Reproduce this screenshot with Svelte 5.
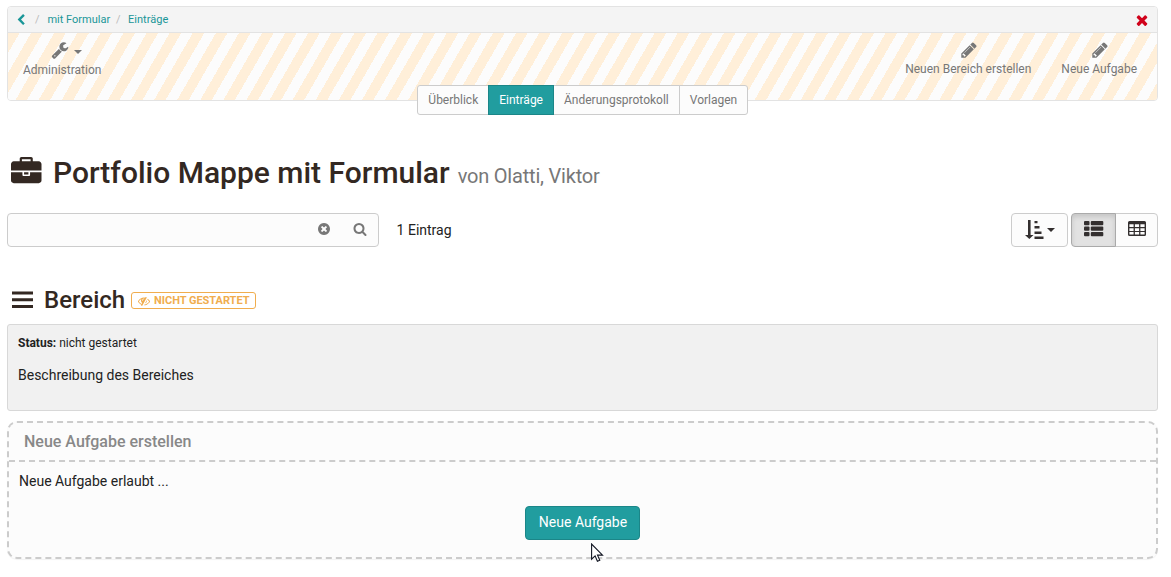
<script>
  const icons = {
    back: 'M1427 301l-531 531 531 531q19 19 19 45t-19 45l-166 166q-19 19-45 19t-45-19l-742-742q-19-19-19-45t19-45l742-742q19-19 45-19t45 19l166 166q19 19 19 45t-19 45z',
    close: 'M1490 1322q0 40-28 68l-136 136q-28 28-68 28t-68-28l-294-294-294 294q-28 28-68 28t-68-28l-136-136q-28-28-28-68t28-68l294-294-294-294q-28-28-28-68t28-68l136-136q28-28 68-28t68 28l294 294 294-294q28-28 68-28t68 28l136 136q28 28 28 68t-28 68l-294 294 294 294q28 28 28 68z',
    wrench: 'M448 1472q0-26-19-45t-45-19-45 19-19 45 19 45 45 19 45-19 19-45zm644-420l-682 682q-37 37-90 37-52 0-91-37l-106-108q-38-36-38-90 0-53 38-91l681-681q39 98 114.500 173.500t173.500 114.500zm634-435q0 39-23 106-47 134-164.500 217.500t-258.500 83.500q-185 0-316.500-131.500t-131.500-316.500 131.500-316.500 316.500-131.500q58 0 121.500 16.500t107.500 46.500q16 11 16 28t-16 28l-293 169v224l193 107q5-3 79-48.500t135.500-81 70.500-35.500q15 0 23.500 10t8.500 25z',
    pencil: 'M491 1536l91-91-235-235-91 91v107h128v128h107zm523-928q0-22-22-22-10 0-17 7l-542 542q-7 7-7 17 0 22 22 22 10 0 17-7l542-542q7-7 7-17zm-54-192l416 416-832 832h-416v-416zm683 96q0 53-37 90l-166 166-416-416 166-165q36-38 90-38 53 0 91 38l235 234q37 39 37 91z',
    briefcase: 'M640 256h512v-128h-512v128zm1152 640v480q0 66-47 113t-113 47h-1472q-66 0-113-47t-47-113v-480h672v160q0 26 19 45t45 19h320q26 0 45-19t19-45v-160h672zm-768 0v128h-256v-128h256zm768-480v384h-1792v-384q0-66 47-113t113-47h352v-160q0-40 28-68t68-28h576q40 0 68 28t28 68v160h352q66 0 113 47t47 113z',
    clear: 'M1277 1122q0-26-19-45l-181-181 181-181q19-19 19-45 0-27-19-46l-90-90q-19-19-46-19-26 0-45 19l-181 181-181-181q-19-19-45-19-27 0-46 19l-90 90q-19 19-19 46 0 26 19 45l181 181-181 181q-19 19-19 45 0 27 19 46l90 90q19 19 46 19 26 0 45-19l181-181 181 181q19 19 45 19 27 0 46-19l90-90q19-19 19-46zm387-226q0 209-103 385.500t-279.500 279.500-385.500 103-385.500-103-279.500-279.500-103-385.500 103-385.500 279.500-279.500 385.500-103 385.500 103 279.500 279.500 103 385.500z',
    search: 'M1216 832q0-185-131.500-316.500t-316.500-131.500-316.500 131.500-131.500 316.500 131.500 316.500 316.500 131.500 316.500-131.500 131.500-316.500zm512 832q0 52-38 90t-90 38q-54 0-90-38l-343-342q-179 124-399 124-143 0-273.500-55.500t-225-150-150-225-55.500-273.500 55.500-273.500 150-225 225-150 273.500-55.500 273.500 55.500 225 150 150 225 55.500 273.500q0 220-124 399l343 343q37 37 37 90z',
    hidden: 'M555 1335l78-141q-87-63-136-159t-49-203q0-121 61-225-229 117-381 353 167 258 427 375zm389-759q0-20-14-34t-34-14q-125 0-214.500 89.500t-89.500 214.500q0 20 14 34t34 14 34-14 14-34q0-86 61-147t147-61q20 0 34-14t14-34zm363-191q0 7-1 9-106 189-316 567t-315 566l-49 89q-10 16-28 16-12 0-134-70-16-10-16-28 0-12 44-87-143-65-263.500-173t-208.500-245q-20-31-20-69t20-69q153-235 380-371t496-136q89 0 180 17l54-97q10-16 28-16 5 0 18 6t31 15.500 33 18.500 31.500 18.500 19.500 11.500q16 10 16 27zm37 447q0 139-79 253.500t-209 164.500l280-502q8 45 8 84zm448 128q0 35-20 69-39 64-109 145-150 172-347.500 267t-419.500 95l74-132q212-18 392.500-137t301.500-307q-115-179-282-294l63-112q95 64 182.500 153t144.500 184q20 34 20 69z'
  };
  const tabs = ['Überblick', 'Einträge', 'Änderungsprotokoll', 'Vorlagen'];
  const active = 'Einträge';
</script>

{#snippet icon(name, size)}
  <svg class="icon" width={size} height={size} viewBox="0 0 1792 1792" aria-hidden="true"><path d={icons[name]} /></svg>
{/snippet}

<main>
  <header>
    <nav class="crumbs">
      <a class="back" href="#back" aria-label="Zurück">{@render icon('back', 12)}</a>
      <span class="sep">/</span><a class="folder" href="#folder">mit Formular</a>
      <span class="sep second">/</span><a href="#entries">Einträge</a>
      <button class="close" aria-label="Schließen">{@render icon('close', 16)}</button>
    </nav>
    <div class="tools">
      <button class="tool admin">
        <span class="glyph">{@render icon('wrench', 18)}<i class="caret"></i></span>
        <span>Administration</span>
      </button>
      <div class="actions">
        <button class="tool"><span class="glyph">{@render icon('pencil', 18)}</span><span>Neuen Bereich erstellen</span></button>
        <button class="tool"><span class="glyph">{@render icon('pencil', 18)}</span><span>Neue Aufgabe</span></button>
      </div>
    </div>
  </header>
  <nav class="tabs">
    {#each tabs as tab}
      <button class:active={tab === active}>{tab}</button>
    {/each}
  </nav>

  <h1>{@render icon('briefcase', 30.5)}<span>Portfolio Mappe mit Formular</span><small>von Olatti, Viktor</small></h1>

  <div class="filter">
    <div class="search">
      <input aria-label="Suche" />
      <button aria-label="Leeren">{@render icon('clear', 14)}</button>
      <button aria-label="Suchen">{@render icon('search', 14)}</button>
    </div>
    <span class="count">1 Eintrag</span>
    <button class="btn sort" aria-label="Sortieren">
      <svg width="19" height="20" viewBox="0 0 19 20"><path d="M3 0h2.600v15h2.900L4.300 19 0 15h3zM9.500 1h3v2.300h-3zM9.500 6h5v2.400h-5zM9.500 11.500h7v2.400h-7zM9.500 16.500h9v2.400h-9z" /></svg>
      <i class="caret"></i>
    </button>
    <div class="views">
      <button class="btn pressed" aria-label="Liste">
        <svg width="20" height="16" viewBox="0 0 20 16"><rect x="0" y="0" width="5.500" height="4.300" rx="1" /><rect x="6.800" y="0" width="12.500" height="4.300" rx="1" /><rect x="0" y="5.500" width="5.500" height="4.300" rx="1" /><rect x="6.800" y="5.500" width="12.500" height="4.300" rx="1" /><rect x="0" y="11" width="5.500" height="4.300" rx="1" /><rect x="6.800" y="11" width="12.500" height="4.300" rx="1" /></svg>
      </button>
      <button class="btn" aria-label="Tabelle">
        <svg width="18" height="15" viewBox="0 0 18 15"><path fill-rule="evenodd" d="M1.500 0h15q1.500 0 1.500 1.500v12q0 1.500-1.500 1.500h-15Q0 15 0 13.500v-12Q0 0 1.500 0zM1.400 3.200v2.700h4.200V3.200zM6.900 3.200v2.700h4.200V3.200zM12.400 3.200v2.700h4.200V3.200zM1.400 7.200v2.700h4.200V7.200zM6.900 7.200v2.700h4.200V7.200zM12.400 7.200v2.700h4.200V7.200zM1.400 11.100v2.500h4.200v-2.500zM6.900 11.100v2.500h4.200v-2.500zM12.400 11.100v2.500h4.200v-2.500z" /></svg>
      </button>
    </div>
  </div>

  <h2>
    <svg width="21" height="18" viewBox="0 0 21 18"><path d="M0 .5h21v3H0zM0 7.200h21v3H0zM0 14h21v3H0z" /></svg>
    <span>Bereich</span>
    <span class="badge">{@render icon('hidden', 12)}NICHT GESTARTET</span>
  </h2>

  <section class="well">
    <p class="status"><b>Status:</b> nicht gestartet</p>
    <p>Beschreibung des Bereiches</p>
  </section>

  <section class="panel">
    <h3>Neue Aufgabe erstellen</h3>
    <div class="body">
      <p>Neue Aufgabe erlaubt ...</p>
      <button class="primary">Neue Aufgabe</button>
    </div>
  </section>
  <svg class="cursor" width="13" height="20" viewBox="0 0 13 20"><path d="M.6 1v15.200l3.500-3.300 2.300 5.400 2.400-1-2.300-5.200h5z" fill="#fff" stroke="#111522" stroke-width="1.100" /></svg>
</main>

<style>
  :global(body) { margin: 0; background: #fff; }
  main { position: relative; box-sizing: border-box; height: 577px; padding: 6px 13px 0 7px; font: 14px/20px Roboto, sans-serif; color: #222; overflow: hidden; }
  * { box-sizing: border-box; }
  button { font: inherit; margin: 0; padding: 0; border: 0; background: none; color: inherit; }
  p, h1, h2, h3 { margin: 0; font-weight: 400; }
  svg { fill: currentColor; flex: none; display: block; }
  a { color: #1a9698; text-decoration: none; }
  .caret { width: 0; height: 0; border: 4px solid transparent; border-top-color: currentColor; border-bottom: 0; }

  header { height: 95px; border: 1px solid #e3e3e3; border-radius: 4px; overflow: hidden; }
  .crumbs { display: flex; align-items: center; height: 26px; padding: 0 8px 0 7px; background: #f4f4f4; border-bottom: 1px solid #e3e3e3; font-size: 11px; }
  .back { width: 20px; }
  .sep { width: 12.4px; color: #bbb; }
  .second { padding-left: 6px; width: 18px; }
  .close { margin: 1px -1px 0 auto; color: #d0021b; }
  .tools { display: flex; justify-content: space-between; height: 67px; padding: 8px 5px 0; background: repeating-linear-gradient(120deg, #ffefd9 0 10px, #fcfcfc 10px 20px); color: #777; font-size: 12px; line-height: 17px; }
  .actions { display: flex; }
  .tool { display: flex; flex-direction: column; align-items: center; height: 39px; padding: 0 15px; }
  .tool > span:last-child { padding-top: 2px; }
  .admin { padding-left: 10px; }
  .admin > span:last-child { padding-top: 3px; }
  .glyph { display: flex; align-items: center; height: 18px; }
  .actions .glyph { padding-left: 1px; }
  .admin .glyph { padding-left: 9px; }
  .glyph .caret { margin: 4px 0 0 5px; border-width: 4px 4.5px 0; }
  .tabs { display: flex; justify-content: center; position: relative; height: 30px; margin: -16px 0 0 1px; font-size: 12px; line-height: 28px; color: #777; }
  .tabs button { height: 30px; padding: 0 10px; border: 1px solid #ccc; background: #fcfcfc; margin-left: -1px; }
  .tabs button:first-child { padding: 0 10px 0 10.6px; border-radius: 3px 0 0 3px; }
  .tabs button:last-child { border-radius: 0 3px 3px 0; }
  .tabs .active { position: relative; z-index: 1; background: #219d9f; border-color: #1b8688; color: #fff; }

  h1 { display: flex; align-items: baseline; height: 42px; margin-top: 37px; padding-left: 4px; color: #332822; font-size: 30px; line-height: 42px; font-weight: 500; }
  h1 .icon { align-self: center; margin-top: -1px; }
  h1 span { margin-left: 11.5px; }
  small { margin-left: 8px; color: #777; font-size: 20px; font-weight: 400; letter-spacing: -.2px; }

  .filter { display: flex; align-items: center; height: 34px; margin-top: 19px; }
  .search { display: flex; width: 372px; height: 34px; border: 1px solid #ccc; border-radius: 4px; background: #fcfcfc; color: #777; }
  .search input { flex: 1; min-width: 0; border: 0; background: none; outline: 0; }
  .search button { display: flex; align-items: center; justify-content: center; width: 36px; padding-bottom: 2px; }
  .count { margin: 0 auto 0 17.600px; }
  .btn { display: flex; align-items: center; justify-content: center; height: 34px; border: 1px solid #ccc; background: #fcfcfc; color: #332f2f; }
  .sort { width: 57px; gap: 3px; border-radius: 4px; }
  .sort svg { margin-top: -1px; }
  .views { display: flex; margin-left: 3px; }
  .views .btn { width: 43px; padding-bottom: 3px; border-radius: 0 4px 4px 0; margin-left: -1px; }
  .views .pressed { width: 45px; margin-left: 0; border-color: #aaa; border-radius: 4px 0 0 4px; background: #e2e2e2; box-shadow: inset 0 3px 5px rgba(0, 0, 0, .125); position: relative; }

  h2 { display: flex; align-items: center; height: 34px; margin-top: 36px; padding-left: 5px; color: #332822; font-size: 24px; line-height: 34px; font-weight: 500; }
  h2 > span:first-of-type { margin-left: 11px; }
  .badge { display: flex; align-items: center; gap: 4px; width: 125px; height: 17px; margin: 1px 0 0 6px; padding: 0 6px; border: 1px solid #f0ad4e; border-radius: 3px; background: #fff; color: #f0ad4e; font-size: 11px; line-height: 15px; font-weight: 700; white-space: nowrap; letter-spacing: -.03px; }

  .well { height: 87px; margin-top: 7px; padding: 8px 10px; border: 1px solid #d8d8d8; border-radius: 3px; background: #f1f1f1; }
  .status { margin-bottom: 12px; font-size: 12px; }

  .panel { height: 138px; margin-top: 10px; border: 2px dashed #ccc; border-radius: 10px; background: #fcfcfc; box-shadow: 0 1px 1px rgba(0, 0, 0, .05); }
  h3 { height: 39px; padding: 0 15px; border-bottom: 2px dashed #ccc; color: #888; font-size: 16px; line-height: 37px; font-weight: 500; }
  .body { padding: 9px 10px 0; }
  .primary { display: block; width: 115px; height: 34px; margin: 15px auto 0; padding: 0 0 1px 1px; border: 1px solid #1b8688; border-radius: 4px; background: #219d9f; color: #fff; line-height: 31px; }
  .cursor { position: absolute; left: 591px; top: 543px; }
</style>
